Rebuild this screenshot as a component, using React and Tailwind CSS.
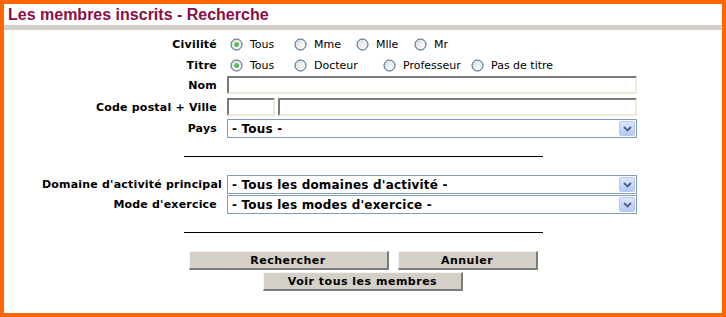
import React from "react";

const Radio = ({ checked }) => (
  <svg width="13" height="13" viewBox="0 0 13 13" className="shrink-0">
    <defs>
      <linearGradient id="rbg" x1="0" y1="0" x2="1" y2="1">
        <stop offset="0" stopColor="#dcdcd6" />
        <stop offset="1" stopColor="#ffffff" />
      </linearGradient>
      <radialGradient id="rdot" cx="0.4" cy="0.4" r="0.6">
        <stop offset="0" stopColor="#6fe26f" />
        <stop offset="1" stopColor="#1a9a1a" />
      </radialGradient>
    </defs>
    <circle cx="6.5" cy="6.5" r="5.5" fill="url(#rbg)" stroke="#2c5a8a" strokeWidth="1" />
    {checked && <circle cx="6.5" cy="6.5" r="2.3" fill="url(#rdot)" />}
  </svg>
);

const Opt = ({ checked, label, w = "" }) => (
  <div className={"flex items-center shrink-0 " + w}>
    <Radio checked={checked} />
    <span className="ml-[7px]">{label}</span>
  </div>
);

const Label = ({ children, w = "w-[213px]" }) => (
  <div className={"shrink-0 text-right font-bold tracking-[0.2px] whitespace-nowrap " + w}>{children}</div>
);

const TextInput = ({ w }) => (
  <div
    className={
      "h-[18px] bg-white border-2 border-t-[#7a7a7a] border-l-[#7a7a7a] border-b-[#ece9d8] border-r-[#ece9d8] " +
      w
    }
  />
);

const Select = ({ text, ml = "ml-[10px]" }) => (
  <div className={"w-[410px] h-[19px] border border-[#7f9db9] bg-white flex items-center justify-between pl-[4px] pr-px " + ml}>
    <span className="font-bold text-[12px] tracking-[0.2px]">{text}</span>
    <div className="w-[16px] h-[15px] rounded-[2px] border border-[#b5c8f4] bg-gradient-to-b from-[#dce6fd] to-[#b5c9f9] flex items-center justify-center">
      <svg width="9" height="6" viewBox="0 0 9 6">
        <path d="M1 1 L4.5 4.5 L8 1" stroke="#4d6185" strokeWidth="1.8" fill="none" />
      </svg>
    </div>
  </div>
);

const Btn = ({ w, children }) => (
  <div
    className={
      "h-[19px] bg-[#d4d0c8] border border-t-[#f4f4f4] border-l-[#f4f4f4] border-b-2 border-r-2 border-b-[#7c7c7c] border-r-[#7c7c7c] flex items-center justify-center font-bold tracking-[0.5px] " +
      w
    }
  >
    {children}
  </div>
);

export default function App() {
  return (
    <div
      className="w-[726px] h-[317px] border-4 border-[#ff6600] bg-white text-black text-[11px] leading-none"
      style={{ fontFamily: '"DejaVu Sans", Verdana, sans-serif' }}
    >
      <div
        className="h-[21px] pl-[4px] flex items-center text-[16px] font-bold text-[#8a0e43]"
        style={{ fontFamily: '"Liberation Sans", Arial, sans-serif' }}
      >
        Les membres inscrits - Recherche
      </div>
      <div className="h-[5px] bg-[#d4d0c8]" />

      <div className="flex flex-col">
        <div className="mt-[4px] h-[21px] flex items-center">
          <Label>Civilité</Label>
          <div className="ml-[13px] flex items-center">
            <Opt checked label="Tous" w="w-[64px]" />
            <Opt label="Mme" w="w-[62px]" />
            <Opt label="Mlle" w="w-[58px]" />
            <Opt label="Mr" />
          </div>
        </div>
        <div className="h-[21px] flex items-center">
          <Label>Titre</Label>
          <div className="ml-[13px] flex items-center">
            <Opt checked label="Tous" w="w-[64px]" />
            <Opt label="Docteur" w="w-[89px]" />
            <Opt label="Professeur" w="w-[88px]" />
            <Opt label="Pas de titre" />
          </div>
        </div>
        <div className="h-[18px] flex items-center">
          <Label>Nom</Label>
          <div className="ml-[10px]">
            <TextInput w="w-[410px]" />
          </div>
        </div>
        <div className="mt-[4px] h-[18px] flex items-center">
          <Label>Code postal + Ville</Label>
          <div className="ml-[10px] flex gap-[3px]">
            <TextInput w="w-[48px]" />
            <TextInput w="w-[359px]" />
          </div>
        </div>
        <div className="mt-[3px] h-[19px] flex items-center">
          <Label>Pays</Label>
          <Select text="- Tous -" />
        </div>

        <div className="mt-[18px] mx-auto w-[359px] h-px bg-black" />

        <div className="mt-[18px] h-[19px] flex items-center">
          <Label w="w-[218px]">Domaine d'activité principal</Label>
          <Select text="- Tous les domaines d'activité -" ml="ml-[5px]" />
        </div>
        <div className="mt-[1px] h-[19px] flex items-center">
          <Label>Mode d'exercice</Label>
          <Select text="- Tous les modes d'exercice -" />
        </div>

        <div className="mt-[18px] mx-auto w-[359px] h-px bg-black" />

        <div className="mt-[18px] flex justify-center gap-[9px]">
          <Btn w="w-[200px]">Rechercher</Btn>
          <Btn w="w-[140px]">Annuler</Btn>
        </div>
        <div className="mt-[2px] flex justify-center">
          <Btn w="w-[200px]">Voir tous les membres</Btn>
        </div>
      </div>
    </div>
  );
}
